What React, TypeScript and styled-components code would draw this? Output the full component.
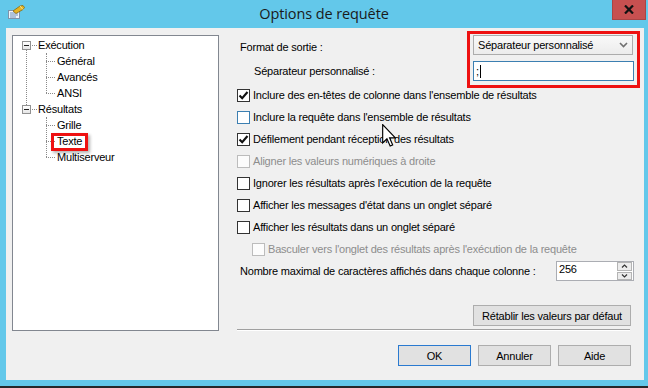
import React from "react";
import styled, { createGlobalStyle } from "styled-components";

const Global = createGlobalStyle`
  html, body { margin: 0; padding: 0; background: #63c8ea; }
  body { font-family: "Liberation Sans", Arial, sans-serif; font-size: 11px; letter-spacing: -0.2px; color: #000; }
  * { box-sizing: border-box; }
`;

const Window = styled.div`
  position: relative;
  width: 648px;
  height: 388px;
  background: #63c8ea;
  display: flex;
  flex-direction: column;
  overflow: hidden;
`;

const TitleBar = styled.div`
  height: 28px;
  display: grid;
  grid-template-columns: 1fr auto 1fr;
  align-items: start;
`;

const TitleIcon = styled.div`
  padding: 5px 0 0 8px;
  height: 28px;
`;

const TitleText = styled.div`
  font-family: "Open Sans", "Liberation Sans", sans-serif;
  font-size: 14.5px;
  line-height: 28px;
  color: #1a1a1a;
  letter-spacing: -0.1px;
`;

const CloseButton = styled.div`
  justify-self: end;
  margin-right: 2px;
  width: 34px;
  height: 20px;
  background: #c75050;
  border: 1px solid #a94545;
  border-top: none;
  display: flex;
  align-items: center;
  justify-content: center;
`;

const Frame = styled.div`
  flex: 1;
  display: flex;
  padding: 0 4px 6px 6px;
  border-bottom: 2px solid #26292b;
`;

const Client = styled.div`
  flex: 1;
  background: #f0f0f0;
  display: flex;
  align-items: flex-start;
`;

/* ---------- tree ---------- */

const TreeBox = styled.div`
  margin: 7px 0 0 6px;
  width: 207px;
  height: 296px;
  background: #fff;
  border: 1px solid #828790;
  padding-top: 1px;
`;

const Group = styled.div<{ $hasNext?: boolean }>`
  position: relative;
  &::before {
    content: "";
    display: ${(p) => (p.$hasNext ? "block" : "none")};
    position: absolute;
    left: 13px;
    top: 8px;
    bottom: -8px;
    border-left: 1px dotted #8a8a8a;
  }
`;

const Children = styled.div`
  position: relative;
  &::before {
    content: "";
    position: absolute;
    left: 33px;
    top: 0;
    bottom: 8px;
    border-left: 1px dotted #8a8a8a;
  }
`;

const TreeRow = styled.div<{ $child?: boolean }>`
  position: relative;
  height: 16px;
  display: flex;
  align-items: center;
  padding-left: ${(p) => (p.$child ? 33 : 9)}px;
`;

const Expander = styled.span`
  position: relative;
  z-index: 1;
  width: 9px;
  height: 9px;
  border: 1px solid #919191;
  background: linear-gradient(#ffffff, #e6e6e6);
  display: flex;
  align-items: center;
  justify-content: center;
  &::after {
    content: "";
    width: 5px;
    height: 1px;
    background: #222;
  }
`;

const HDots = styled.span<{ $w: number; $ml?: number; $mr?: number }>`
  width: ${(p) => p.$w}px;
  margin-left: ${(p) => p.$ml ?? 0}px;
  margin-right: ${(p) => p.$mr ?? 0}px;
  border-top: 1px dotted #8a8a8a;
  height: 0;
`;

const TreeLabel = styled.span<{ $marked?: boolean }>`
  position: relative;
  line-height: 16px;
  white-space: nowrap;
  &::after {
    content: "";
    display: ${(p) => (p.$marked ? "block" : "none")};
    position: absolute;
    left: -6px;
    right: -6px;
    top: 0;
    bottom: -2px;
    border: 3px solid #ee1111;
    box-shadow: 2px 2px 3px rgba(0, 0, 0, 0.3);
  }
`;

/* ---------- right pane ---------- */

const Pane = styled.div`
  margin-left: 18px;
  width: 407px;
  padding-top: 3px;
  display: flex;
  flex-direction: column;
`;

const TopRow = styled.div`
  display: flex;
  margin-bottom: -4px;
`;

const Labels = styled.div`
  width: 230px;
  padding-top: 8px;
  display: flex;
  flex-direction: column;
  gap: 8px;
`;

const FieldLabel = styled.div<{ $indent?: number }>`
  line-height: 16px;
  padding-left: ${(p) => p.$indent ?? 3}px;
  white-space: nowrap;
`;

const RedBox = styled.div`
  width: 173px;
  height: 57px;
  border: 3px solid #ee1111;
  padding: 1px 0 0 3px;
  display: flex;
  flex-direction: column;
  gap: 6px;
`;

const Combo = styled.div`
  width: 160px;
  height: 20px;
  border: 1px solid #acacac;
  background: linear-gradient(#f9f9f9, #ececec);
  display: flex;
  align-items: center;
  justify-content: space-between;
  padding: 0 4px 0 4px;
`;

const TextInput = styled.div`
  width: 161px;
  height: 20px;
  border: 1px solid #3c7fb1;
  background: #fff;
  display: flex;
  align-items: center;
  padding-left: 2px;
`;

const Caret = styled.span`
  width: 1px;
  height: 13px;
  background: #000;
  margin-left: 1px;
`;

const CheckList = styled.div`
  display: flex;
  flex-direction: column;
`;

const CheckRow = styled.div<{ $indent?: number; $disabled?: boolean }>`
  height: 22px;
  display: flex;
  align-items: center;
  gap: 3px;
  padding-left: ${(p) => p.$indent ?? 0}px;
  color: ${(p) => (p.$disabled ? "#8d8d8d" : "#000")};
  white-space: nowrap;
`;

type BoxState = "normal" | "hover" | "disabled";

const Box = styled.span<{ $state: BoxState }>`
  width: 13px;
  height: 13px;
  flex: none;
  background: ${(p) => (p.$state === "disabled" ? "#fcfcfc" : "#fff")};
  border: 1px solid
    ${(p) =>
      p.$state === "hover" ? "#3c7fb1" : p.$state === "disabled" ? "#bcbcbc" : "#333"};
  display: flex;
  align-items: center;
  justify-content: center;
`;

const SpinRow = styled.div`
  margin-top: 1px;
  height: 20px;
  display: flex;
  align-items: center;
`;

const SpinBox = styled.div`
  margin-left: auto;
  margin-right: 10px;
  width: 78px;
  height: 20px;
  border: 1px solid #abadb3;
  background: #fff;
  display: flex;
`;

const SpinValue = styled.div`
  flex: 1;
  padding: 1px 0 0 2px;
  line-height: 13px;
`;

const SpinButtons = styled.div`
  width: 16px;
  display: flex;
  flex-direction: column;
  gap: 1px;
  padding: 0 1px 0 0;
`;

const SpinBtn = styled.div`
  flex: 1;
  background: #ececec;
  border: 1px solid #b4b4b4;
  display: flex;
  align-items: center;
  justify-content: center;
`;

const ResetRow = styled.div`
  margin-top: 24px;
  display: flex;
  justify-content: flex-end;
  padding-right: 13px;
`;

const Button = styled.div<{ $default?: boolean; $w: number }>`
  width: ${(p) => p.$w}px;
  height: 21px;
  background: #e1e1e1;
  border: 1px solid ${(p) => (p.$default ? "#2a7ad0" : "#adadad")};
  display: flex;
  align-items: center;
  justify-content: center;
  white-space: nowrap;
`;

const Separator = styled.div`
  margin-top: 3px;
  width: 393px;
  border-top: 1px solid #a0a0a0;
  border-bottom: 1px solid #ffffff;
`;

const ButtonRow = styled.div`
  margin-top: 14px;
  display: flex;
  justify-content: flex-end;
  gap: 7px;
  padding-right: 13px;
`;

const Cursor = styled.svg`
  position: absolute;
  left: 382px;
  top: 124px;
`;

/* ---------- small drawings ---------- */

const Check = () => (
  <svg width="11" height="11" viewBox="0 0 11 11">
    <path d="M1.5 5.5 L4.2 8.3 L9.5 2" fill="none" stroke="#111" strokeWidth="2.1" />
  </svg>
);

const CheckBox: React.FC<{
  checked?: boolean;
  state?: BoxState;
  indent?: number;
  children: React.ReactNode;
}> = ({ checked, state = "normal", indent, children }) => (
  <CheckRow $indent={indent} $disabled={state === "disabled"}>
    <Box $state={state}>{checked && <Check />}</Box>
    <span>{children}</span>
  </CheckRow>
);

const AppIcon = () => (
  <svg width="18" height="14" viewBox="0 0 18 14">
    <rect x="0.5" y="5.5" width="11" height="8" fill="#eef4fb" stroke="#7f93aa" />
    <path d="M2 8h8M2 10h8M2 12h6" stroke="#6e8fb8" strokeWidth="1" />
    <path d="M5 6 L12 1 L15 0.5 L16.5 2.5 L15 4.5 L8 8.5 Z" fill="#e6b422" stroke="#8a6a10" strokeWidth="0.8" />
    <path d="M12 1 L15 4.5" stroke="#fff3b0" strokeWidth="0.8" />
  </svg>
);

const TreeRoot: React.FC<{ label: string; items: string[]; marked?: string; hasNext?: boolean }> = ({
  label,
  items,
  marked,
  hasNext,
}) => (
  <Group $hasNext={hasNext}>
    <TreeRow>
      <Expander />
      <HDots $w={5} $ml={1} $mr={1} />
      <TreeLabel>{label}</TreeLabel>
    </TreeRow>
    <Children>
      {items.map((it) => (
        <TreeRow key={it} $child>
          <HDots $w={9} $mr={2} />
          <TreeLabel $marked={it === marked}>{it}</TreeLabel>
        </TreeRow>
      ))}
    </Children>
  </Group>
);

export default function App() {
  return (
    <>
      <Global />
      <Window>
        <TitleBar>
          <TitleIcon>
            <AppIcon />
          </TitleIcon>
          <TitleText>Options de requête</TitleText>
          <CloseButton>
            <svg width="10" height="9" viewBox="0 0 10 9">
              <path d="M1 0.5 L9 8.5 M9 0.5 L1 8.5" stroke="#111" strokeWidth="2.2" />
            </svg>
          </CloseButton>
        </TitleBar>
        <Frame>
          <Client>
            <TreeBox>
              <TreeRoot label="Exécution" items={["Général", "Avancés", "ANSI"]} hasNext />
              <TreeRoot label="Résultats" items={["Grille", "Texte", "Multiserveur"]} marked="Texte" />
            </TreeBox>
            <Pane>
              <TopRow>
                <Labels>
                  <FieldLabel>Format de sortie :</FieldLabel>
                  <FieldLabel $indent={17}>Séparateur personnalisé :</FieldLabel>
                </Labels>
                <RedBox>
                  <Combo>
                    <span>Séparateur personnalisé</span>
                    <svg width="9" height="6" viewBox="0 0 9 6">
                      <path d="M1 1 L4.5 4.5 L8 1" fill="none" stroke="#707070" strokeWidth="1.6" />
                    </svg>
                  </Combo>
                  <TextInput>
                    <span>;</span>
                    <Caret />
                  </TextInput>
                </RedBox>
              </TopRow>
              <CheckList>
                <CheckBox checked>Inclure des en-têtes de colonne dans l'ensemble de résultats</CheckBox>
                <CheckBox state="hover">Inclure la requête dans l'ensemble de résultats</CheckBox>
                <CheckBox checked>Défilement pendant réception des résultats</CheckBox>
                <CheckBox state="disabled">Aligner les valeurs numériques à droite</CheckBox>
                <CheckBox>Ignorer les résultats après l'exécution de la requête</CheckBox>
                <CheckBox>Afficher les messages d'état dans un onglet séparé</CheckBox>
                <CheckBox>Afficher les résultats dans un onglet séparé</CheckBox>
                <CheckBox state="disabled" indent={15}>
                  Basculer vers l'onglet des résultats après l'exécution de la requête
                </CheckBox>
              </CheckList>
              <SpinRow>
                <FieldLabel>Nombre maximal de caractères affichés dans chaque colonne :</FieldLabel>
                <SpinBox>
                  <SpinValue>256</SpinValue>
                  <SpinButtons>
                    <SpinBtn>
                      <svg width="7" height="4" viewBox="0 0 7 4">
                        <path d="M1 3.5 L3.5 1 L6 3.5" fill="none" stroke="#333" strokeWidth="1.2" />
                      </svg>
                    </SpinBtn>
                    <SpinBtn>
                      <svg width="7" height="4" viewBox="0 0 7 4">
                        <path d="M1 0.5 L3.5 3 L6 0.5" fill="none" stroke="#333" strokeWidth="1.2" />
                      </svg>
                    </SpinBtn>
                  </SpinButtons>
                </SpinBox>
              </SpinRow>
              <ResetRow>
                <Button $w={158}>Rétablir les valeurs par défaut</Button>
              </ResetRow>
              <Separator />
              <ButtonRow>
                <Button $w={73} $default>OK</Button>
                <Button $w={73}>Annuler</Button>
                <Button $w={73}>Aide</Button>
              </ButtonRow>
            </Pane>
          </Client>
        </Frame>
        <Cursor width="14" height="23" viewBox="0 0 12 20">
          <path d="M0.5 0.5 L0.5 16.5 L4.2 12.8 L7 19.2 L9.2 18.2 L6.5 12 L11.5 12 Z" fill="#fff" stroke="#000" strokeWidth="1" />
        </Cursor>
      </Window>
    </>
  );
}
